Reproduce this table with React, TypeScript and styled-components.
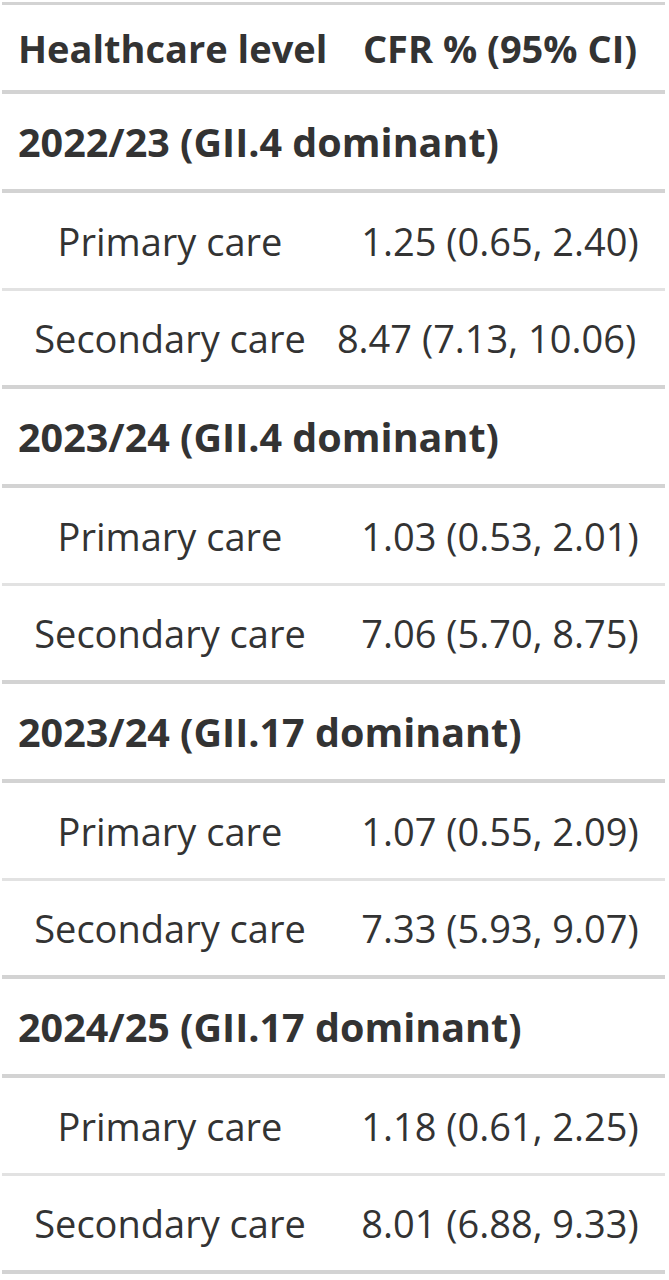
import React from "react";
import styled, { createGlobalStyle } from "styled-components";

const Global = createGlobalStyle`
  html, body { margin: 0; padding: 0; background: #ffffff; }
  body { font-family: "Open Sans", "Noto Sans", sans-serif; color: #333333; }
`;

const Table = styled.table`
  margin: 2px 0 0 2px;
  width: 663px;
  border-collapse: collapse;
  table-layout: fixed;
  border-top: 3px solid #d3d3d3;
  font-family: "Open Sans", "Noto Sans", sans-serif;
  color: #333333;
`;

const Row = styled.tr<{ $thin?: boolean }>`
  border-bottom: ${(p) => (p.$thin ? "3px solid #e2e2e2" : "4px solid #d3d3d3")};
`;

const HeadCell = styled.th<{ $value?: boolean }>`
  height: 85px;
  padding: 0 0 0 ${(p) => (p.$value ? 13 : 16)}px;
  font-size: 38px;
  font-weight: 700;
  text-align: center;
  vertical-align: middle;
  white-space: nowrap;
`;

const GroupCell = styled.td`
  height: 95px;
  padding: 0 0 0 16px;
  font-size: 39.5px;
  font-weight: 700;
  text-align: left;
  vertical-align: middle;
  white-space: nowrap;
`;

const LabelCell = styled.td<{ $h: number }>`
  height: ${(p) => p.$h}px;
  padding: 0 0 0 16px;
  font-size: 38px;
  font-weight: 400;
  text-align: center;
  vertical-align: middle;
  white-space: nowrap;
`;

const ValueCell = styled.td<{ $h: number; $wide?: boolean }>`
  height: ${(p) => p.$h}px;
  padding: ${(p) => (p.$wide ? "0 14px 0 0" : "0 0 0 13px")};
  font-size: 38px;
  font-weight: 400;
  text-align: center;
  vertical-align: middle;
  white-space: nowrap;
`;

type Group = {
  title: string;
  rows: { label: string; value: string; wide?: boolean }[];
};

const groups: Group[] = [
  {
    title: "2022/23 (GII.4 dominant)",
    rows: [
      { label: "Primary care", value: "1.25 (0.65, 2.40)" },
      { label: "Secondary care", value: "8.47 (7.13, 10.06)", wide: true },
    ],
  },
  {
    title: "2023/24 (GII.4 dominant)",
    rows: [
      { label: "Primary care", value: "1.03 (0.53, 2.01)" },
      { label: "Secondary care", value: "7.06 (5.70, 8.75)" },
    ],
  },
  {
    title: "2023/24 (GII.17 dominant)",
    rows: [
      { label: "Primary care", value: "1.07 (0.55, 2.09)" },
      { label: "Secondary care", value: "7.33 (5.93, 9.07)" },
    ],
  },
  {
    title: "2024/25 (GII.17 dominant)",
    rows: [
      { label: "Primary care", value: "1.18 (0.61, 2.25)" },
      { label: "Secondary care", value: "8.01 (6.88, 9.33)" },
    ],
  },
];

export default function App() {
  return (
    <>
      <Global />
      <Table>
        <colgroup>
          <col style={{ width: 320 }} />
          <col style={{ width: 343 }} />
        </colgroup>
        <thead>
          <Row>
            <HeadCell>Healthcare level</HeadCell>
            <HeadCell $value>CFR % (95% CI)</HeadCell>
          </Row>
        </thead>
        <tbody>
          {groups.map((g) => (
            <React.Fragment key={g.title}>
              <Row>
                <GroupCell colSpan={2}>{g.title}</GroupCell>
              </Row>
              {g.rows.map((r, i) => (
                <Row key={r.label} $thin={i === 0}>
                  <LabelCell $h={i === 0 ? 95 : 94}>{r.label}</LabelCell>
                  <ValueCell $h={i === 0 ? 95 : 94} $wide={r.wide}>
                    {r.value}
                  </ValueCell>
                </Row>
              ))}
            </React.Fragment>
          ))}
        </tbody>
      </Table>
    </>
  );
}
